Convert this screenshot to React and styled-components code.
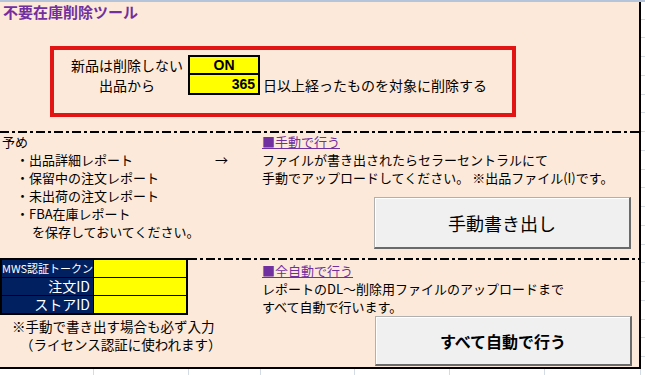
import React from 'react'
import styled, { createGlobalStyle } from 'styled-components'

const GlobalStyle = createGlobalStyle`
  html, body {
    margin: 0;
    padding: 0;
    background: #fff;
  }
  body {
    font-family: "Noto Sans CJK JP", "Noto Sans", sans-serif;
  }
`

const dashDot = `repeating-linear-gradient(to right, #000 0 9px, transparent 9px 12px, #000 12px 15px, transparent 15px 18px)`

const Frame = styled.div`
  width: 645px;
  height: 375px;
  box-sizing: border-box;
  border-top: 2px solid #b4c4da;
  display: grid;
  grid-template-columns: 641px 1fr;
  grid-template-rows: 367px 1fr;
  overflow: hidden;
`

const Sheet = styled.div`
  grid-row: 1;
  grid-column: 1;
  box-sizing: border-box;
  background: #fde9d9;
  border-right: 2px solid #000;
  border-bottom: 2px solid #000;
  display: flex;
  flex-direction: column;
  font-size: 13px;
  line-height: 18px;
  color: #000;
`

const Title = styled.div`
  height: 20px;
  line-height: 20px;
  padding: 0 3px;
  font-size: 15px;
  font-weight: bold;
  color: #7030a0;
`

const RedBox = styled.div`
  margin: 24px 0 0 50px;
  width: 466px;
  height: 71px;
  box-sizing: border-box;
  border: 4px solid #e31414;
  padding: 5px 0 0 12px;
  display: grid;
  grid-template-columns: 122px 72px auto;
  grid-template-rows: 20px 20px;
  align-items: center;
`

const Label = styled.div`
  grid-column: 1;
  text-align: center;
  font-size: 14px;
  white-space: nowrap;
`

const ValueCell = styled.div`
  grid-column: 2;
  height: 20px;
  box-sizing: border-box;
  border: 2px solid #000;
  border-top-width: ${({ $first }) => ($first ? '2px' : '0')};
  background: #ffff00;
  padding: 0 3px;
  font-family: "Liberation Sans", Arial, sans-serif;
  font-weight: bold;
  font-size: 14px;
  line-height: ${({ $first }) => ($first ? '16px' : '18px')};
  text-align: ${({ $align }) => $align};
`

const Desc = styled.div`
  grid-column: 3;
  padding-left: 3px;
  font-size: 14px;
  white-space: nowrap;
`

const Divider = styled.div`
  height: 2px;
  margin-top: ${({ $gap }) => $gap || 0}px;
  background-image: ${dashDot};
`

const Middle = styled.div`
  height: 125px;
  display: grid;
  grid-template-columns: 260px 1fr;
`

const LeftCol = styled.div`
  padding-left: 2px;
`

const Line = styled.div`
  display: flex;
  padding-left: ${({ $indent }) => $indent || 0}px;
  white-space: nowrap;
`

const Arrow = styled.span`
  margin-left: auto;
  width: 45px;
`

const RightCol = styled.div`
  display: flex;
  flex-direction: column;
  padding-left: 2px;
  padding-top: ${({ $top }) => $top || 0}px;
  grid-column: ${({ $area }) => $area || 'auto'};
  grid-row: ${({ $rows }) => $rows || 'auto'};
`

const LinkLine = styled.div`
  color: #7030a0;
  text-decoration: underline;
  white-space: nowrap;
`

const ActionButton = styled.button`
  align-self: flex-end;
  margin: ${({ $top }) => $top}px ${({ $right }) => $right}px 0 0;
  width: 257px;
  height: ${({ $h }) => $h}px;
  box-sizing: border-box;
  padding: 0;
  background: #f0f0f0;
  border: 1px solid #b0b0b0;
  border-right: 2px solid #6a6a6a;
  border-bottom: 2px solid #6a6a6a;
  box-shadow: inset 1px 1px 0 #fff;
  font-family: "Noto Sans CJK JP", sans-serif;
  font-size: ${({ $bold }) => ($bold ? '16px' : '18px')};
  font-weight: ${({ $bold }) => ($bold ? 'bold' : 'normal')};
  color: #000;
`

const BottomGrid = styled.div`
  flex: 1;
  display: grid;
  grid-template-columns: 188px 72px 1fr;
  grid-template-rows: auto 1fr;
`

const PartialDivider = styled.div`
  grid-column: 2 / 4;
  grid-row: 1;
  align-self: start;
  height: 2px;
  background-image: ${dashDot};
`

const TokenTable = styled.div`
  grid-column: 1;
  grid-row: 1;
  width: 188px;
  box-sizing: border-box;
  border: 2px solid #000;
  display: grid;
  grid-template-columns: 92px 1fr;
`

const TableLabel = styled.div`
  height: ${({ $last }) => ($last ? '17px' : '18px')};
  box-sizing: border-box;
  background: #002060;
  color: #fff;
  text-align: right;
  padding-right: 3px;
  border-right: 1px solid #000;
  border-bottom: ${({ $last }) => ($last ? '0' : '1px solid #000')};
  font-size: ${({ $small }) => ($small ? '11px' : '14px')};
  line-height: 17px;
  white-space: nowrap;
`

const TableInput = styled.div`
  height: ${({ $last }) => ($last ? '17px' : '18px')};
  box-sizing: border-box;
  background: #ffff00;
  border-bottom: ${({ $last }) => ($last ? '0' : '1px solid #000')};
`

const Notes = styled.div`
  grid-column: 1 / 3;
  grid-row: 2;
  padding-top: 2px;
  line-height: 18px;
  font-size: 13.5px;
`

const BottomStrip = styled.div`
  grid-row: 2;
  grid-column: 1;
  display: flex;
`

const GridCell = styled.div`
  flex: ${({ $w }) => ($w ? `0 0 ${$w}px` : '1')};
  box-sizing: border-box;
  border-right: 1px solid #d5dbe5;
`

const RightStrip = styled.div`
  grid-row: 1 / 3;
  grid-column: 2;
  background-image: repeating-linear-gradient(to bottom, transparent 0 16.75px, #d5dbe5 16.75px 17.75px, transparent 17.75px 18.75px);
`

const tokenRows = [
  { label: 'MWS認証トークン', small: true },
  { label: '注文ID' },
  { label: 'ストアID' },
]

const stripCols = [94, 95, 72, 94, 95, 95, 0]

const App = () => {
  return (
    <>
      <GlobalStyle />
      <Frame>
        <Sheet>
          <Title>不要在庫削除ツール</Title>

          <RedBox>
            <Label>新品は削除しない</Label>
            <ValueCell $first $align="center">ON</ValueCell>
            <Label>出品から</Label>
            <ValueCell $align="right">365</ValueCell>
            <Desc>日以上経ったものを対象に削除する</Desc>
          </RedBox>

          <Divider $gap={14} />

          <Middle>
            <LeftCol>
              <Line>予め</Line>
              <Line $indent={14}>・出品詳細レポート<Arrow>→</Arrow></Line>
              <Line $indent={14}>・保留中の注文レポート</Line>
              <Line $indent={14}>・未出荷の注文レポート</Line>
              <Line $indent={14}>・FBA在庫レポート</Line>
              <Line $indent={30}>を保存しておいてください。</Line>
            </LeftCol>
            <RightCol>
              <LinkLine>■手動で行う</LinkLine>
              <Line>ファイルが書き出されたらセラーセントラルにて</Line>
              <Line>手動でアップロードしてください。 ※出品ファイル(I)です。</Line>
              <ActionButton $top={10} $right={8} $h={52}>手動書き出し</ActionButton>
            </RightCol>
          </Middle>

          <BottomGrid>
            <PartialDivider />
            <TokenTable>
              {tokenRows.map((row, i) => (
                <React.Fragment key={row.label}>
                  <TableLabel $small={row.small} $last={i === tokenRows.length - 1}>{row.label}</TableLabel>
                  <TableInput $last={i === tokenRows.length - 1} />
                </React.Fragment>
              ))}
            </TokenTable>
            <Notes>
              <Line $indent={12}>※手動で書き出す場合も必ず入力</Line>
              <Line $indent={20}>（ライセンス認証に使われます）</Line>
            </Notes>
            <RightCol $area="3" $rows="1 / 3" $top={4}>
              <LinkLine>■全自動で行う</LinkLine>
              <Line>レポートのDL～削除用ファイルのアップロードまで</Line>
              <Line>すべて自動で行います。</Line>
              <ActionButton $top={0} $right={7} $h={50} $bold>すべて自動で行う</ActionButton>
            </RightCol>
          </BottomGrid>
        </Sheet>

        <BottomStrip>
          {stripCols.map((w, i) => (
            <GridCell key={i} $w={w} />
          ))}
        </BottomStrip>
        <RightStrip />
      </Frame>
    </>
  )
}

export default App
